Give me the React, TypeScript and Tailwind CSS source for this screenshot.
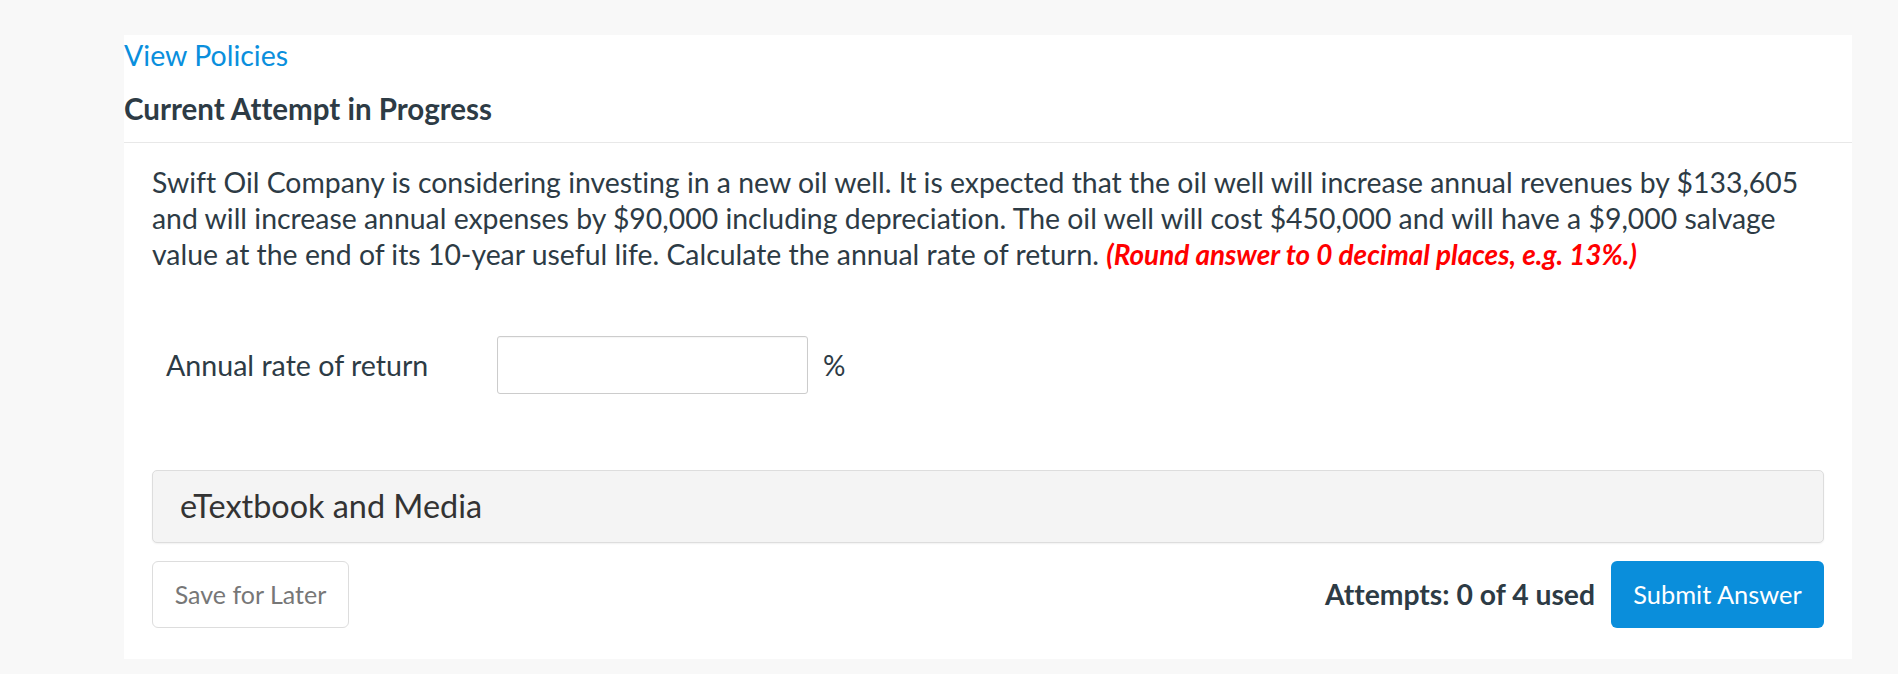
export default function App() {
  return (
    <div className="min-h-[674px] w-full bg-[#f8f8f8] pt-[35px] font-['Lato',sans-serif] text-[#2d3b45] [font-variant-ligatures:none]">
      <div className="ml-[124px] w-[1728px] bg-white pb-[31px]">
        <div className="border-b border-[#e8e8e8]">
          <a href="#" className="block h-[40px] pt-[2px] text-[28.5px] leading-[36px] text-[#0a8fdd]">
            View Policies
          </a>
          <h2 className="h-[67px] pt-[16px] text-[29.5px] leading-[36px] font-bold text-[#2d3b45]">
            Current Attempt in Progress
          </h2>
        </div>

        <div className="px-[28px] pt-[21px]">
          <p className="text-[28.4px] leading-[36px]">
            Swift Oil Company is considering investing in a new oil well. It is expected that the oil well will
            increase annual revenues by $133,605 and will increase annual expenses by $90,000 including
            depreciation. The oil well will cost $450,000 and will have a $9,000 salvage value at the end of its
            10-year useful life. Calculate the annual rate of return.{' '}
            <span className="text-[27.9px] font-bold italic text-[#ff0000]">(Round answer to 0 decimal places, e.g. 13%.)</span>
          </p>

          <div className="mt-[64px] flex items-center pl-[14px]">
            <label className="w-[331px] text-[28.6px] leading-[36px]">Annual rate of return</label>
            <input
              type="text"
              className="h-[58px] w-[311px] rounded-[3px] border border-[#cccccc] bg-white px-3 text-[24px] shadow-[inset_0_1px_1px_rgba(0,0,0,0.04)] outline-none"
            />
            <span className="ml-[15px] text-[28px] leading-[36px]">%</span>
          </div>

          <div className="mt-[76px] flex h-[73px] items-center rounded-[5px] border border-[#dddddd] bg-[#f4f4f4] px-[27px] shadow-[0_1px_2px_rgba(0,0,0,0.06)]">
            <span className="text-[32.4px] text-[#333333]">eTextbook and Media</span>
          </div>

          <div className="mt-[18px] flex items-center justify-between">
            <button className="h-[67px] w-[197px] rounded-[6px] border border-[#dddddd] bg-white text-[25px] text-[#777777]">
              Save for Later
            </button>
            <div className="flex items-center gap-[16px]">
              <span className="text-[28.3px] font-bold text-[#2d3b45]">Attempts: 0 of 4 used</span>
              <button className="h-[67px] w-[213px] rounded-[6px] bg-[#0a8edb] text-[25.4px] text-white">
                Submit Answer
              </button>
            </div>
          </div>
        </div>
      </div>
    </div>
  );
}
